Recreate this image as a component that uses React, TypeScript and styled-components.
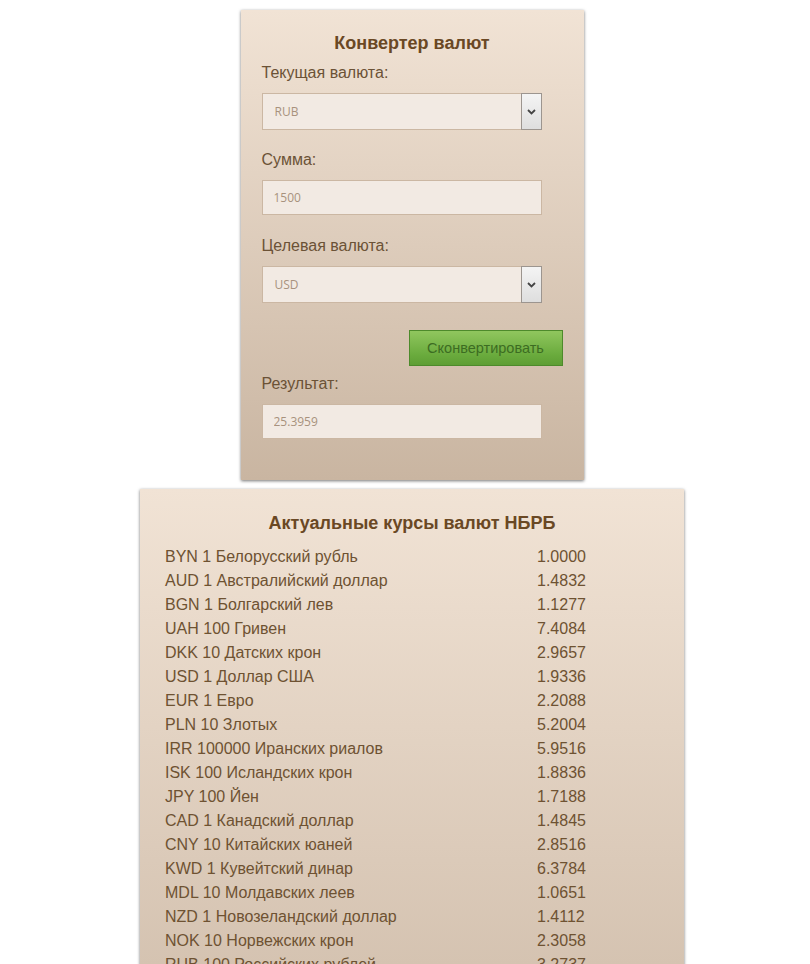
import React from "react";
import styled, { createGlobalStyle } from "styled-components";

const Global = createGlobalStyle`
  html, body { margin: 0; padding: 0; background: #ffffff; }
  body { font-family: "Liberation Sans", Arial, sans-serif; }
`;

const Page = styled.div`
  display: flex;
  flex-direction: column;
  align-items: center;
  gap: 9px;
  padding: 10px 0 40px 14px;
`;

const Card = styled.div<{ $w: number; $end: string }>`
  width: ${(p) => p.$w}px;
  box-sizing: border-box;
  background: linear-gradient(to bottom, #f1e3d5 0%, ${(p) => p.$end} 100%);
  box-shadow: 0 1px 3px rgba(0, 0, 0, 0.55);
  color: #6e5232;
`;

const ConverterCard = styled(Card)`
  padding: 20px 21px 41px 21px;
`;

const RatesCard = styled(Card)`
  padding: 21px 25px 24px 25px;
`;

const Title = styled.h2<{ $size: number }>`
  margin: 0;
  text-align: center;
  font-size: ${(p) => p.$size}px;
  line-height: 26px;
  font-weight: bold;
  color: #6a4824;
`;

const Field = styled.div<{ $mt: number }>`
  margin-top: ${(p) => p.$mt}px;
  display: flex;
  flex-direction: column;
  align-items: flex-start;
`;

const Label = styled.label`
  font-size: 16px;
  line-height: 20px;
  color: #6b5236;
  margin-bottom: 10px;
`;

const inputBase = `
  box-sizing: border-box;
  width: 280px;
  background: #f2eae3;
  border: 1px solid #cbb7a3;
  font-family: "Open Sans", "Liberation Sans", sans-serif;
  font-size: 12px;
  color: #a8927d;
  padding: 0 12px;
  outline: none;
  margin: 0;
`;

const TextInput = styled.input`
  ${inputBase}
  height: 35px;
  padding-left: 11px;
`;

const SelectWrap = styled.div`
  position: relative;
  width: 280px;
  height: 37px;
`;

const Select = styled.select`
  ${inputBase}
  height: 37px;
  appearance: none;
  -webkit-appearance: none;
`;

const Arrow = styled.span`
  position: absolute;
  top: 0;
  right: 0;
  width: 21px;
  height: 37px;
  box-sizing: border-box;
  border: 1px solid #9c958f;
  background: linear-gradient(to bottom, #f4f4f4, #dedede);
  display: flex;
  align-items: center;
  justify-content: center;
  pointer-events: none;
`;

const ButtonRow = styled.div`
  display: flex;
  justify-content: flex-end;
  margin-top: 27px;
`;

const Button = styled.button`
  width: 154px;
  height: 36px;
  margin: 0;
  border: 1px solid #4d8a2b;
  background: linear-gradient(to bottom, #90c65e 0%, #6aab3d 70%, #5e9e34 100%);
  color: #3c6c22;
  font-family: "Liberation Sans", Arial, sans-serif;
  font-size: 14.5px;
  cursor: pointer;
`;

const Rates = styled.div`
  margin-top: 9px;
  display: grid;
  grid-template-columns: 372px auto;
  font-size: 16px;
  line-height: 24px;
  color: #6e5232;
`;

const Cell = styled.div`
  white-space: nowrap;
`;

const Chevron = () => (
  <svg width="9" height="6" viewBox="0 0 9 6">
    <path d="M1 1 L4.5 4.5 L8 1" fill="none" stroke="#444" strokeWidth="1.8" />
  </svg>
);

const rates: [string, string][] = [
  ["BYN 1 Белорусский рубль", "1.0000"],
  ["AUD 1 Австралийский доллар", "1.4832"],
  ["BGN 1 Болгарский лев", "1.1277"],
  ["UAH 100 Гривен", "7.4084"],
  ["DKK 10 Датских крон", "2.9657"],
  ["USD 1 Доллар США", "1.9336"],
  ["EUR 1 Евро", "2.2088"],
  ["PLN 10 Злотых", "5.2004"],
  ["IRR 100000 Иранских риалов", "5.9516"],
  ["ISK 100 Исландских крон", "1.8836"],
  ["JPY 100 Йен", "1.7188"],
  ["CAD 1 Канадский доллар", "1.4845"],
  ["CNY 10 Китайских юаней", "2.8516"],
  ["KWD 1 Кувейтский динар", "6.3784"],
  ["MDL 10 Молдавских леев", "1.0651"],
  ["NZD 1 Новозеландский доллар", "1.4112"],
  ["NOK 10 Норвежских крон", "2.3058"],
  ["RUB 100 Российских рублей", "3.2737"],
  ["XDR 1 СДР (Специальные права заимствования)", "2.7168"],
  ["SGD 1 Сингапурский доллар", "1.4109"],
  ["KGS 100 Сомов", "2.7780"],
  ["KZT 1000 Тенге", "5.0935"],
  ["TRY 10 Турецких лир", "3.6045"],
  ["GBP 1 Фунт стерлингов", "2.5072"],
  ["CZK 100 Чешских крон", "8.6145"],
  ["SEK 10 Шведских крон", "2.2017"],
  ["CHF 1 Швейцарский франк", "1.9521"],
];

export default function App() {
  return (
    <>
      <Global />
      <Page>
        <ConverterCard $w={343} $end="#c9b5a1">
          <Title $size={18}>Конвертер валют</Title>
          <Field $mt={7}>
            <Label>Текущая валюта:</Label>
            <SelectWrap>
              <Select defaultValue="RUB">
                <option>RUB</option>
                <option>USD</option>
                <option>EUR</option>
              </Select>
              <Arrow>
                <Chevron />
              </Arrow>
            </SelectWrap>
          </Field>
          <Field $mt={20}>
            <Label>Сумма:</Label>
            <TextInput defaultValue="1500" />
          </Field>
          <Field $mt={21}>
            <Label>Целевая валюта:</Label>
            <SelectWrap>
              <Select defaultValue="USD">
                <option>RUB</option>
                <option>USD</option>
                <option>EUR</option>
              </Select>
              <Arrow>
                <Chevron />
              </Arrow>
            </SelectWrap>
          </Field>
          <ButtonRow>
            <Button>Сконвертировать</Button>
          </ButtonRow>
          <Field $mt={8}>
            <Label>Результат:</Label>
            <TextInput defaultValue="25.3959" readOnly />
          </Field>
        </ConverterCard>
        <RatesCard $w={544} $end="#c6b29e">
          <Title $size={18}>Актуальные курсы валют НБРБ</Title>
          <Rates>
            {rates.map(([name, value]) => (
              <React.Fragment key={name}>
                <Cell>{name}</Cell>
                <Cell>{value}</Cell>
              </React.Fragment>
            ))}
          </Rates>
        </RatesCard>
      </Page>
    </>
  );
}
